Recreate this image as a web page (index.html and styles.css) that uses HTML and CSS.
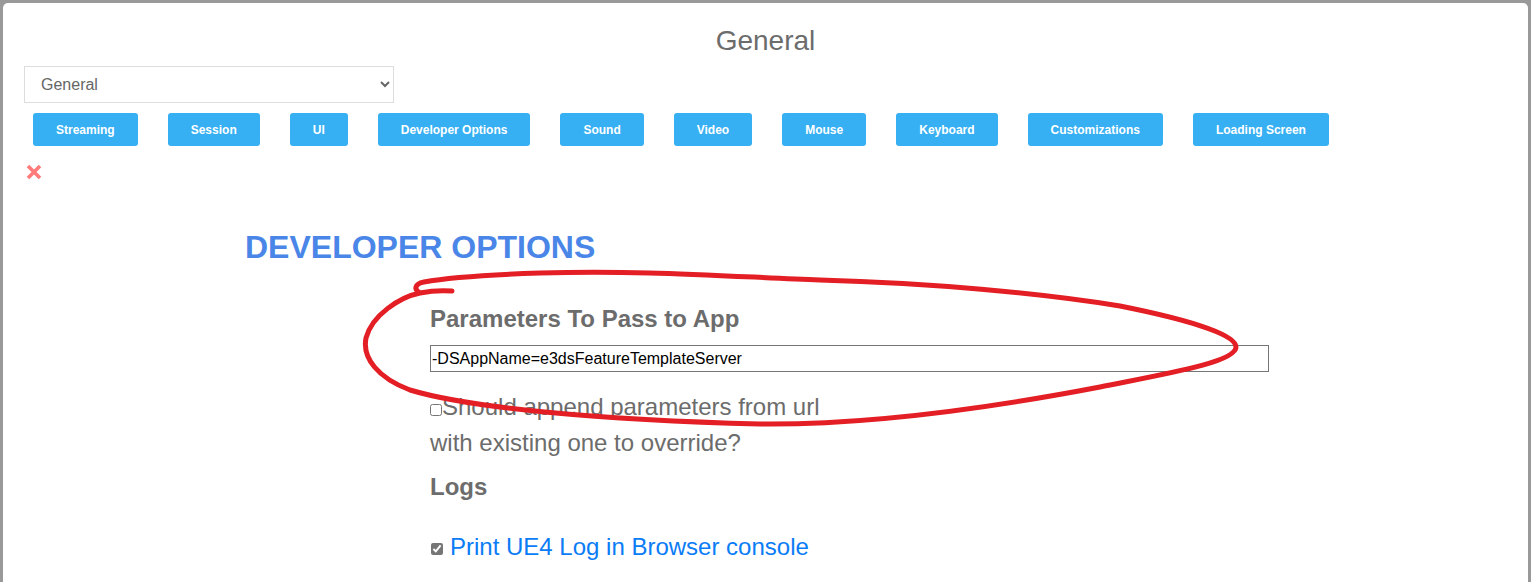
FILE: index.html
```html
<!DOCTYPE html>
<html lang="en">
<head>
  <meta charset="UTF-8" />
  <meta name="viewport" content="width=device-width, initial-scale=1.0"/>
  <title>Settings - General</title>
  <link rel="stylesheet" href="styles.css">
</head>
<body>
  <div class="panel">
    <h1 class="title">General</h1>

    <select class="picker">
      <option>General</option>
      <option>Developer Options</option>
    </select>

    <nav class="tabs">
      <button class="tab">Streaming</button>
      <button class="tab">Session</button>
      <button class="tab">UI</button>
      <button class="tab">Developer Options</button>
      <button class="tab">Sound</button>
      <button class="tab">Video</button>
      <button class="tab">Mouse</button>
      <button class="tab">Keyboard</button>
      <button class="tab">Customizations</button>
      <button class="tab">Loading Screen</button>
    </nav>

    <div class="close">
      <svg width="16" height="16" viewBox="0 0 16 16">
        <path d="M2 2 L14 14 M14 2 L2 14" stroke="#ff7a7a" stroke-width="3.6" fill="none"/>
      </svg>
    </div>

    <section class="dev">
      <h2>DEVELOPER OPTIONS</h2>

      <div class="fields">
        <h3>Parameters To Pass to App</h3>
        <input class="params" type="text" value="-DSAppName=e3dsFeatureTemplateServer">

        <label class="append"><input type="checkbox">Should append parameters from url with existing one to override?</label>

        <h3 class="logs-title">Logs</h3>
        <label class="log-opt"><input type="checkbox" checked>Print UE4 Log in Browser console</label>
      </div>
    </section>
  </div>

  <!-- red marker circle drawn over the screenshot -->
  <svg class="scribble" width="1531" height="582" viewBox="0 0 1531 582">
    <path d="M452 291
             C440 290, 430 291, 420 293
             C400 297, 372 315, 366 338
             C362 358, 378 378, 410 390
             C470 408, 600 420, 760 424
             C860 425, 980 410, 1100 387
             C1170 373, 1236 362, 1236 347
             C1236 333, 1180 318, 1120 306
             C1040 293, 930 283, 820 280
             C720 276, 640 270, 540 273
             C480 275, 440 279, 424 282
             C414 284, 414 290, 420 293"
          fill="none" stroke="#e31e24" stroke-width="5" stroke-linecap="round" stroke-linejoin="round"/>
  </svg>
</body>
</html>
```

FILE: styles.css
```css
* {
  box-sizing: border-box;
}

html, body {
  height: 100%;
}

body {
  margin: 0;
  padding: 3px 3px 0;
  background: #999;
  font-family: "Liberation Sans", Arial, sans-serif;
  color: #6c6c6c;
  overflow: hidden;
}

.panel {
  background: #fff;
  border-radius: 5px 5px 0 0;
  min-height: 100%;
  padding: 22px 21px 0;
}

.title {
  margin: 0;
  font-size: 28px;
  font-weight: normal;
  line-height: 32px;
  text-align: center;
  color: #6c6c6c;
}

.picker {
  display: block;
  margin-top: 9px;
  width: 370px;
  height: 37px;
  padding: 0 12px;
  border: 1px solid #ddd;
  border-radius: 0;
  background: #fff;
  font-family: inherit;
  font-size: 16px;
  color: #666;
}

/* tab buttons */
.tabs {
  display: flex;
  gap: 30px;
  margin-top: 10px;
  padding-left: 9px;
}

.tab {
  height: 33px;
  padding: 0 23px;
  border: none;
  border-radius: 3px;
  background-color: #36aff3;
  color: #fff;
  font-family: inherit;
  font-size: 12px;
  font-weight: bold;
  cursor: pointer;
}

.close {
  margin-top: 18px;
  padding-left: 2px;
  height: 16px;
}

.close svg {
  display: block;
}

.dev {
  padding-left: 221px;
}

.dev h2 {
  margin: 49px 0 0;
  font-size: 32px;
  line-height: 37px;
  color: #4a86e8;
}

.fields {
  margin-left: 185px;
}

.fields h3 {
  margin: 39px 0 0;
  font-size: 24px;
  line-height: 28px;
  color: #6c6c6c;
}

.params {
  display: block;
  margin-top: 12px;
  width: 839px;
  height: 27px;
  padding: 0 1px;
  border: 1px solid #767676;
  border-radius: 0;
  font-family: inherit;
  font-size: 16px;
  color: #000;
}

.append {
  display: block;
  width: 400px;
  margin-top: 17px;
  font-size: 24px;
  line-height: 36px;
  color: #6c6c6c;
}

.append input {
  width: 12px;
  height: 12px;
  margin: 0;
  vertical-align: -1px;
}

.fields .logs-title {
  margin-top: 12px;
}

.log-opt {
  display: block;
  margin-top: 32px;
  font-size: 24px;
  line-height: 28px;
  color: #0a7cf5;
}

.log-opt input {
  width: 12px;
  height: 12px;
  margin: 0 7px 0 1px;
  vertical-align: 0;
  accent-color: #767676;
}

.scribble {
  position: absolute;
  top: 0;
  left: 0;
  pointer-events: none;
}
```
